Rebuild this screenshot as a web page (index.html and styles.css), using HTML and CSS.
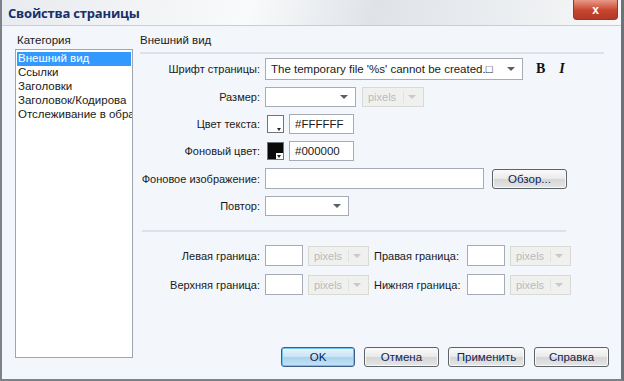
FILE: index.html
```html
<!DOCTYPE html>
<html lang="ru">

<head>
    <meta charset="UTF-8">
    <title>Свойства страницы</title>
    <link rel="stylesheet" href="styles.css">
</head>

<body>
    <div class="window">
        <div class="titlebar">
            <span class="title">Свойства страницы</span>
            <span class="close">x</span>
        </div>

        <div class="content">
            <div class="category">
                <div class="caption">Категория</div>
                <ul class="list">
                    <li class="selected">Внешний вид</li>
                    <li>Ссылки</li>
                    <li>Заголовки</li>
                    <li>Заголовок/Кодирова</li>
                    <li>Отслеживание в обра</li>
                </ul>
            </div>

            <div class="panel">
                <div class="caption section">Внешний вид</div>

                <div class="form">
                    <label>Шрифт страницы:</label>
                    <div class="controls">
                        <div class="select font-select"><span>The temporary file '%s' cannot be created.&#9633;</span><i class="arrow"></i></div>
                        <b class="style-btn bold">B</b>
                        <b class="style-btn italic">I</b>
                    </div>

                    <label>Размер:</label>
                    <div class="controls">
                        <div class="select size-select"><span></span><i class="arrow"></i></div>
                        <div class="select units disabled"><span>pixels</span><i class="arrow"></i></div>
                    </div>

                    <label>Цвет текста:</label>
                    <div class="controls">
                        <span class="swatch white"><i class="tri"></i></span>
                        <div class="field color">#FFFFFF</div>
                    </div>

                    <label>Фоновый цвет:</label>
                    <div class="controls">
                        <span class="swatch black"><i class="tri"></i></span>
                        <div class="field color">#000000</div>
                    </div>

                    <label>Фоновое изображение:</label>
                    <div class="controls">
                        <div class="field image"></div>
                        <button class="btn browse">Обзор...</button>
                    </div>

                    <label>Повтор:</label>
                    <div class="controls">
                        <div class="select repeat-select"><span></span><i class="arrow"></i></div>
                    </div>
                </div>

                <hr class="divider">

                <div class="margins">
                    <label>Левая граница:</label>
                    <div class="controls">
                        <div class="field small"></div>
                        <div class="select units disabled"><span>pixels</span><i class="arrow"></i></div>
                    </div>
                    <label>Правая граница:</label>
                    <div class="controls">
                        <div class="field small"></div>
                        <div class="select units disabled"><span>pixels</span><i class="arrow"></i></div>
                    </div>

                    <label>Верхняя граница:</label>
                    <div class="controls">
                        <div class="field small"></div>
                        <div class="select units disabled"><span>pixels</span><i class="arrow"></i></div>
                    </div>
                    <label>Нижняя граница:</label>
                    <div class="controls">
                        <div class="field small"></div>
                        <div class="select units disabled"><span>pixels</span><i class="arrow"></i></div>
                    </div>
                </div>

                <div class="buttons">
                    <button class="btn default">OK</button>
                    <button class="btn">Отмена</button>
                    <button class="btn wide">Применить</button>
                    <button class="btn">Справка</button>
                </div>
            </div>
        </div>
    </div>
</body>

</html>
```

FILE: styles.css
```css
body {
    margin: 0;
    padding: 0;
    font-family: "Liberation Sans", Arial, sans-serif;
    font-size: 11px;
    color: #1a1a1a;
    background: #ffffff;
}

.window {
    width: 624px;
    height: 381px;
    box-sizing: border-box;
    display: flex;
    flex-direction: column;
    background-color: #f3f6fb;
    border-left: 2px solid #7d8188;
    border-right: 3px solid #6e7278;
    border-bottom: 2px solid #7d8188;
}

.titlebar {
    height: 25px;
    display: flex;
    align-items: center;
    justify-content: space-between;
    padding-left: 6px;
    background: linear-gradient(100deg, #e8ebef 0%, #f9fafb 40%, #dfe3e8 60%, #f6f7f8 100%);
    border-bottom: 1px solid #c9ced6;
}

.title {
    font-family: "Open Sans", "DejaVu Sans", sans-serif;
    font-weight: bold;
    font-size: 13px;
    color: #17306a;
    letter-spacing: -0.2px;
}

.close {
    align-self: flex-start;
    width: 43px;
    height: 19px;
    margin-right: 3px;
    display: flex;
    align-items: center;
    justify-content: center;
    color: #ffffff;
    font-weight: bold;
    font-size: 12px;
    border-radius: 0 0 4px 4px;
    background: linear-gradient(#e89a88, #c8452e 55%, #b23a24);
    border: 1px solid #8a3b2c;
    border-top: none;
}

.content {
    flex: 1;
    display: flex;
    padding: 7px 0 0 13px;
}

.category {
    width: 118px;
    display: flex;
    flex-direction: column;
    padding-bottom: 21px;
}

.caption {
    height: 16px;
    padding-left: 2px;
    line-height: 14px;
    font-size: 11.5px;
}

.list {
    flex: 1;
    margin: 0;
    padding: 2px 1px;
    list-style: none;
    background: #ffffff;
    border: 1px solid #9ea5ad;
    overflow: hidden;
    white-space: nowrap;
    font-size: 11.5px;
}

.list li {
    height: 14px;
    line-height: 13px;
    padding-left: 1px;
}

.list li.selected {
    background-color: #3399ff;
    color: #ffffff;
}

.panel {
    flex: 1;
    display: flex;
    flex-direction: column;
    padding-left: 7px;
    padding-right: 17px;
}

.section {
    padding-left: 0;
    padding-bottom: 3px;
    border-bottom: 2px solid #dde2e8;
}

.form {
    display: grid;
    grid-template-columns: 120px auto;
    column-gap: 5px;
    row-gap: 7px;
    padding-top: 4px;
    align-items: center;
}

.form label,
.margins label {
    text-align: right;
    white-space: nowrap;
}

.controls {
    display: flex;
    align-items: center;
    gap: 6px;
}

.select,
.field {
    box-sizing: border-box;
    height: 21px;
    background: #ffffff;
    border: 1px solid #a5acb5;
    display: flex;
    align-items: center;
    white-space: nowrap;
    overflow: hidden;
}

.select span {
    flex: 1;
    padding-left: 5px;
    overflow: hidden;
}

.arrow {
    width: 0;
    height: 0;
    margin: 0 7px 0 4px;
    border-left: 4px solid transparent;
    border-right: 4px solid transparent;
    border-top: 4px solid #5a5f66;
}

.font-select {
    width: 258px;
    height: 22px;
}

.font-select span {
    font-size: 11.5px;
}

.size-select {
    width: 91px;
    height: 20px;
}

.repeat-select {
    width: 84px;
    height: 20px;
}

.units {
    width: 62px;
    height: 20px;
}

.disabled {
    background: #f0f1ee;
    border-color: #d8dbd5;
    color: #b6bbbf;
}

.disabled .arrow {
    border-top-color: #c6cacb;
}

.disabled span {
    border-right: 1px solid #e1e3df;
}

.style-btn {
    font-family: "Liberation Serif", serif;
    font-size: 14px;
    color: #111111;
    margin-left: 7px;
}

.italic {
    font-style: italic;
    margin-left: 8px;
}

.swatch {
    position: relative;
    box-sizing: border-box;
    width: 17px;
    height: 18px;
    margin-left: 2px;
    border: 1px solid #6f757c;
}

.swatch.white {
    background: #ffffff;
}

.swatch.black {
    background: #0a0a0a;
}

.tri {
    position: absolute;
    right: 0;
    bottom: 0;
    width: 7px;
    height: 6px;
    background: #ffffff;
}

.tri::after {
    content: "";
    position: absolute;
    left: 1px;
    top: 2px;
    border-left: 2.5px solid transparent;
    border-right: 2.5px solid transparent;
    border-top: 3px solid #222222;
}

.field.color {
    width: 65px;
    height: 20px;
    padding-left: 5px;
    margin-left: -1px;
    font-size: 11.5px;
}

.field.image {
    width: 219px;
    height: 21px;
}

.field.small {
    width: 38px;
    height: 21px;
}

.btn {
    box-sizing: border-box;
    height: 20px;
    padding: 0;
    font-family: "Liberation Sans", Arial, sans-serif;
    font-size: 11.5px;
    color: #0e2454;
    border: 1px solid #5d636a;
    border-radius: 3px;
    background: linear-gradient(#fbfbfb, #e9e9e9 50%, #d6d6d6 51%, #e6e6e6);
    box-shadow: inset 0 0 0 1px #f8f8f8;
}

.browse {
    width: 75px;
    margin-left: 2px;
}

.divider {
    margin: 14px 38px 0 2px;
    border: none;
    border-top: 2px solid #dde2e8;
}

.margins {
    display: grid;
    grid-template-columns: 120px 104px 88px auto;
    column-gap: 5px;
    row-gap: 8px;
    padding-top: 13px;
    align-items: center;
}

.margins label:nth-of-type(even) {
    text-align: left;
    padding-left: 0;
}

.margins .controls {
    gap: 5px;
}

.margins .units {
    width: 61px;
}

.buttons {
    margin-top: auto;
    margin-bottom: 12px;
    margin-right: -5px;
    display: flex;
    justify-content: flex-end;
    gap: 9px;
}

.buttons .btn {
    width: 75px;
}

.buttons .wide {
    width: 77px;
}

.buttons .default {
    width: 74px;
    border-color: #3c5d8a;
    background: linear-gradient(#eaf5fc, #c8e3f4 50%, #a8d2ee 51%, #c6e4f6);
    box-shadow: inset 0 0 0 1px #6fc3f0;
}
```
